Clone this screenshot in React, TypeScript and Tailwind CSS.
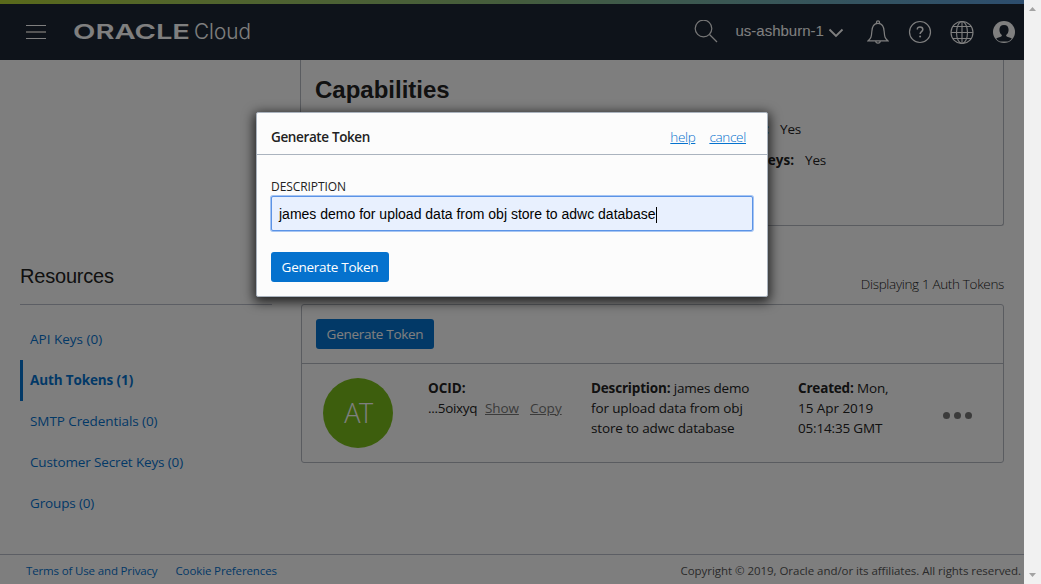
import type { ReactNode } from "react";

const resources = [
  { label: "API Keys (0)", tracking: "tracking-[0px]" },
  { label: "Auth Tokens (1)", active: true, tracking: "tracking-[-0.12px]" },
  { label: "SMTP Credentials (0)", tracking: "tracking-[-0.08px]" },
  { label: "Customer Secret Keys (0)", tracking: "tracking-[-0.14px]" },
  { label: "Groups (0)", tracking: "tracking-[-0.15px]" },
];

function TokenButton() {
  return (
    <button className="flex h-[30px] w-[118px] shrink-0 items-center justify-center rounded-[3px] bg-[#0572ce] text-[13.5px] tracking-[-0.28px] whitespace-nowrap text-white">
      Generate Token
    </button>
  );
}

function Header() {
  return (
    <header className="relative flex h-[60px] shrink-0 flex-col bg-[#1d2735]">
      <div className="h-1 bg-linear-to-r from-[#b3d335] via-[#8ab97a] to-[#5a9bdc]" />
      <div className="flex h-14 items-center">
        <svg className="ml-[26px] h-5 w-5" viewBox="0 0 20 20" shapeRendering="crispEdges">
          <path d="M0 3h20v1H0zM0 16h20v1H0z" fill="#fff" />
          <path d="M0 9h20v2H0z" fill="#aaa" />
        </svg>
        <svg className="ml-7 h-8 w-[190px]" viewBox="0 -4 190 32" fill="#fff">
          <text x="-1" y="19" fontFamily="Inter, sans-serif" fontWeight="600" fontSize="20.5" textLength="117" lengthAdjust="spacingAndGlyphs">ORACLE</text>
          <text x="120" y="19" fontFamily="Inter, sans-serif" fontWeight="300" fontSize="21.5" textLength="57" lengthAdjust="spacingAndGlyphs">Cloud</text>
        </svg>
        <svg className="ml-[430px] h-6 w-6" viewBox="0 0 24 24" fill="none" stroke="#eee" strokeWidth="1.2">
          <circle cx="9.5" cy="8.5" r="8.3" />
          <path d="M15.5 14.5 23 22" />
        </svg>
        <span className="-mt-0.5 ml-[17.5px] w-[88.5px] font-['Liberation_Sans',sans-serif] text-[15px] leading-5 whitespace-nowrap text-white">us-ashburn-1</span>
        <svg className="ml-1 h-4 w-4" viewBox="0 0 16 16" fill="none" stroke="#fff" strokeWidth="1.8">
          <path d="m1.5 5.5 6.5 6.5 6.5-6.5" />
        </svg>
        <svg className="ml-[23px] h-6 w-[22px]" viewBox="0 0 22 24" fill="none" stroke="#fff" strokeWidth="1.2">
          <path d="M1.2 20.8c2.8-2.7 3.3-4 3.6-9C5 6.500 7.500 3.300 11 3.300s6 3.200 6.200 8.500c.3 5 .8 6.300 3.600 9z" />
          <path d="M9.500 3.400V2.300a1.500 1.500 0 0 1 3 0v1.100M8.800 21a2.200 2.200 0 0 0 4.400 0" />
        </svg>
        <svg className="ml-[19px] h-6 w-6" viewBox="0 0 24 24" fill="none" stroke="#fff" strokeWidth="1.2">
          <circle cx="12" cy="12" r="10.500" />
          <path d="M9.300 9.400c0-1.600 1.100-2.500 2.700-2.500s2.800 1 2.800 2.500c0 2.200-2.700 2.300-2.700 4.700" strokeWidth="1.500" />
          <circle cx="12.100" cy="16.500" r="1" fill="#fff" stroke="none" />
        </svg>
        <svg className="ml-[18px] h-6 w-6" viewBox="0 0 24 24" fill="none" stroke="#fff" strokeWidth="1.1">
          <circle cx="12" cy="12.500" r="11" />
          <ellipse cx="12" cy="12.500" rx="5.500" ry="11" />
          <path d="M12 1.500v22M1 12.500h22M3 6.500h18M3 18.500h18" />
        </svg>
        <svg className="ml-[18px] h-6 w-6" viewBox="0 0 24 24">
          <circle cx="12" cy="12" r="11" fill="#fff" />
          <path d="M12 5c-3.100 0-4.700 2-4.600 4.900.1 2.100.9 3.900 2.400 5v1c-1 1-3.700 1.300-5.600 2.700.9 1.300 2.300 2.400 3.800 3h8c1.500-.6 2.900-1.700 3.800-3-1.900-1.400-4.600-1.700-5.600-2.700v-1c1.500-1.100 2.300-2.900 2.400-5C16.700 7 15.100 5 12 5z" fill="#1d2735" />
        </svg>
      </div>
    </header>
  );
}

function Sidebar() {
  return (
    <aside className="ml-5 w-[252px] shrink-0 pt-[194px]">
      <h2 className="h-[51px] border-b border-[#b9bdc8] pt-2 font-['Liberation_Sans',sans-serif] text-[20px] leading-7 tracking-[-0.2px] text-[#222]">Resources</h2>
      <ul className="pt-[14px] text-[13.5px] text-[#0572ce]">
        {resources.map((r) => (
          <li
            key={r.label}
            className={`flex h-[41px] items-center ${r.tracking} ${r.active ? "border-l-3 border-[#0572ce] pl-[7px] font-bold" : "pl-2.5"}`}
          >
            {r.label}
          </li>
        ))}
      </ul>
    </aside>
  );
}

function Capability({ label, children }: { label: ReactNode; children: ReactNode }) {
  return (
    <div className="flex h-[31px] items-center gap-[11px] tracking-[-0.2px]">
      <b className="tracking-normal">{label}</b>
      <span>{children}</span>
    </div>
  );
}

function Main() {
  return (
    <main className="ml-7 w-[704px] shrink-0 text-[13.5px] leading-5 tracking-[-0.18px] text-[#222]">
      <section className="h-[166px] rounded-b-[3px] border border-t-0 border-[#b4b8c0] pt-[14px] pl-[14px]">
        <h1 className="font-['Liberation_Sans',sans-serif] text-[24px] leading-8 font-bold tracking-normal">Capabilities</h1>
        <div className="flex flex-col pt-[7px]">
          <div className="flex w-[486px] justify-end">
            <Capability label={<span className="text-[#0572ce]">:</span>}>Yes</Capability>
          </div>
          <div className="flex w-[511px] justify-end">
            <Capability label="keys:">Yes</Capability>
          </div>
        </div>
      </section>
      <p className="h-[78px] pt-[48px] text-right font-light tracking-[-0.34px]">Displaying 1 Auth Tokens</p>
      <section className="ml-px h-[159px] rounded-[3px] border border-[#b4b8c0]">
        <div className="flex h-[59px] items-center border-b border-[#b4b8c0] pl-[14px]">
          <TokenButton />
        </div>
        <div className="flex pl-[21px]">
          <div className="mt-[14px] flex h-[70px] w-[70px] shrink-0 items-center justify-center rounded-full bg-[#7abd1b] text-[27px] font-light tracking-[-1.5px] text-white">AT</div>
          <div className="mt-[14px] ml-[35px] w-[163px] shrink-0 whitespace-nowrap">
            <b className="tracking-normal">OCID:</b>
            <div className="flex">
              <span className="w-[57px] tracking-[-0.3px]">...5oixyq</span>
              <span className="w-[45px] tracking-[-0.1px] text-[#777] underline">Show</span>
              <span className="tracking-normal text-[#777] underline">Copy</span>
            </div>
          </div>
          <p className="mt-[14px] w-[207px] shrink-0 whitespace-nowrap">
            <b>Description:</b> james demo<br />
            <span className="tracking-[-0.12px]">for upload data from obj</span><br />
            <span className="tracking-[-0.14px]">store to adwc database</span>
          </p>
          <p className="mt-[14px] w-[144.500px] shrink-0 whitespace-nowrap">
            <b>Created:</b> Mon,<br />
            <span className="tracking-[-0.05px]">15 Apr 2019</span><br />05:14:35 GMT
          </p>
          <div className="mt-12 flex gap-[4.300px]">
            <i className="h-[7px] w-[7px] rounded-full bg-[#777]" />
            <i className="h-[7px] w-[7px] rounded-full bg-[#777]" />
            <i className="h-[7px] w-[7px] rounded-full bg-[#777]" />
          </div>
        </div>
      </section>
    </main>
  );
}

function Modal() {
  return (
    <div className="h-[185px] w-[512px] rounded-[2px] border border-[#aab3be] bg-[#fcfcfc] text-[13.5px] text-[#222] shadow-[0_3px_12px_2px_rgba(0,0,0,0.75)]">
      <div className="flex h-[42px] items-center border-b border-[#aab3be] pt-2 pr-[21px] pl-[14px]">
        <h3 className="flex-1 font-semibold tracking-[-0.37px]">Generate Token</h3>
        <a className="mr-[14px] font-light tracking-[-0.35px] text-[#0572ce] underline">help</a>
        <a className="font-light tracking-[-0.3px] text-[#0572ce] underline">cancel</a>
      </div>
      <div className="pt-[23px] pl-[14px]">
        <label className="block h-[18px] text-[12px] leading-[18px] tracking-[-0.08px]">DESCRIPTION</label>
        <div className="flex h-[35px] w-[482px] items-center rounded-[2px] border border-[#5b93e6] bg-[#e8f0fe] pt-0.5 pl-[7px] font-['Liberation_Sans',sans-serif] text-[14px] whitespace-nowrap text-black shadow-[0_0_0_1px_#a6c5f3]">
          <span>james demo for upload data from obj store to adwc database</span>
          <i className="h-4 w-px bg-black" />
        </div>
        <div className="pt-[21px]">
          <TokenButton />
        </div>
      </div>
    </div>
  );
}

export default function App() {
  return (
    <div className="flex h-[584px] w-[1041px] overflow-hidden font-['Open_Sans','Noto_Sans',sans-serif]">
      <div className="relative flex w-[1024px] shrink-0 flex-col bg-[#fdfdfd]">
        <Header />
        <div className="flex h-[494px] shrink-0">
          <Sidebar />
          <Main />
        </div>
        <footer className="flex h-[30px] shrink-0 items-center border-t border-[#b9bdc8] pt-0.5 pr-[3px] pl-[26px] text-[11.5px] whitespace-nowrap">
          <a className="tracking-[-0.15px] text-[#0572ce]">Terms of Use and Privacy</a>
          <a className="ml-[18px] tracking-[-0.12px] text-[#0572ce]">Cookie Preferences</a>
          <span className="ml-auto tracking-[-0.04px] text-[#555]">Copyright © 2019, Oracle and/or its affiliates. All rights reserved.</span>
        </footer>
        <div className="absolute inset-0 flex justify-center bg-black/50 pt-28">
          <Modal />
        </div>
      </div>
      <div className="flex w-[17px] shrink-0 flex-col items-center justify-between bg-[#f1f1f1] py-[7px]">
        <svg className="h-1 w-[7px]" viewBox="0 0 7 4"><path d="M0 4 3.500 0 7 4z" fill="#a3a3a3" /></svg>
        <svg className="h-1 w-[7px]" viewBox="0 0 7 4"><path d="M0 0 3.500 4 7 0z" fill="#a3a3a3" /></svg>
      </div>
    </div>
  );
}
